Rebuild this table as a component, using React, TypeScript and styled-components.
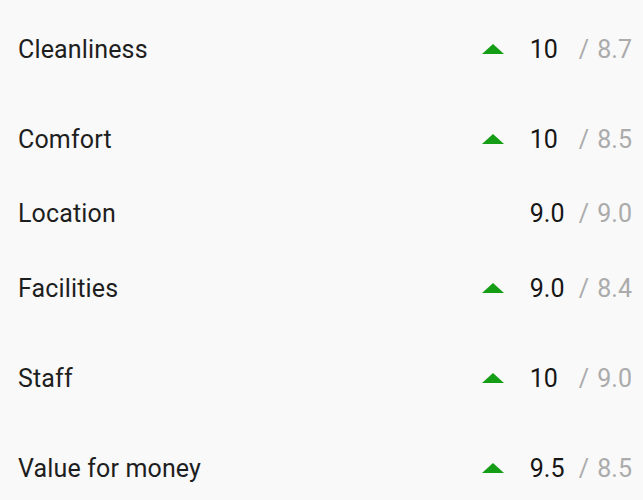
import React from "react";
import styled, { createGlobalStyle } from "styled-components";

const Global = createGlobalStyle`
  html, body { margin: 0; padding: 0; background: #f9f9f9; }
  body { font-family: Roboto, "Noto Sans", sans-serif; }
`;

const List = styled.div`
  display: flex;
  flex-direction: column;
  padding: 12px 11px 0 18px;
  width: 643px;
  box-sizing: border-box;
`;

const Row = styled.div<{ $spaced?: boolean }>`
  display: flex;
  align-items: center;
  height: 74.5px;
  margin-top: ${(p) => (p.$spaced ? "15.5px" : "0")};
`;

const Label = styled.div`
  flex: 1;
  font-size: 25px;
  letter-spacing: 0.15px;
  color: #1e1e1e;
`;

const Trend = styled.div`
  width: 22px;
  height: 10px;
  margin-right: 26px;
  display: flex;
`;

const Score = styled.div`
  width: 49px;
  font-size: 25px;
  color: #161616;
`;

const Avg = styled.div`
  font-size: 25px;
  color: #ababab;
  word-spacing: 2px;
`;

const Up = () => (
  <svg width="22" height="10" viewBox="0 0 22 10">
    <polygon points="11,0 22,10 0,10" fill="#159d15" />
  </svg>
);

const rows = [
  { label: "Cleanliness", score: "10", avg: "8.7", up: true, spaced: false },
  { label: "Comfort", score: "10", avg: "8.5", up: true, spaced: true },
  { label: "Location", score: "9.0", avg: "9.0", up: false, spaced: false },
  { label: "Facilities", score: "9.0", avg: "8.4", up: true, spaced: false },
  { label: "Staff", score: "10", avg: "9.0", up: true, spaced: true },
  { label: "Value for money", score: "9.5", avg: "8.5", up: true, spaced: true },
];

export default function App() {
  return (
    <>
      <Global />
      <List>
        {rows.map((r) => (
          <Row key={r.label} $spaced={r.spaced}>
            <Label>{r.label}</Label>
            <Trend>{r.up && <Up />}</Trend>
            <Score>{r.score}</Score>
            <Avg>/ {r.avg}</Avg>
          </Row>
        ))}
      </List>
    </>
  );
}
